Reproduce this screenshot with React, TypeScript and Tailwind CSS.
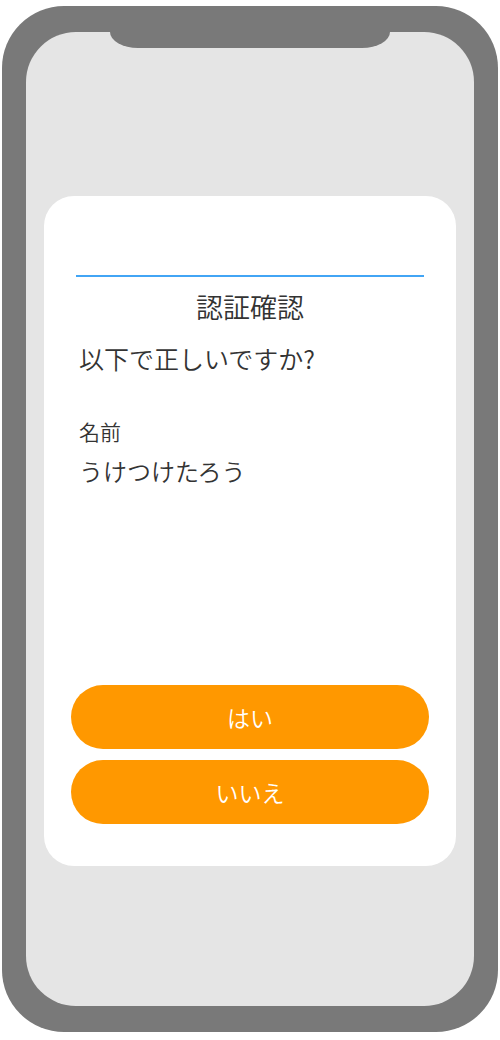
import React from "react";

export default function App() {
  const font = { fontFamily: '"Noto Sans CJK JP", "Noto Sans", sans-serif' };
  return (
    <div className="w-[500px] h-[1040px] bg-white relative" style={font}>
      <div className="absolute left-[2px] top-[6px] w-[496px] h-[1026px] rounded-[62px] bg-[#797979] px-[24px] py-[26px]">
        <div className="relative w-full h-full rounded-[50px] bg-[#e5e5e5] pt-[164px] px-[18px]">
          <div className="absolute left-[84px] top-0 w-[280px] h-[16px] bg-[#797979] rounded-bl-[28px_16px] rounded-br-[28px_16px]" />
          <div className="w-[412px] h-[670px] bg-white rounded-[30px] flex flex-col font-[350]">
            <div className="mt-[79px] mx-[32px] h-[2px] bg-[#42a5f5]" />
            <div className="mt-[13px] text-center text-[27px] leading-[34px] text-[#333333]">認証確認</div>
            <div className="mt-[17px] px-[35px] text-[25px] leading-[34px] text-[#333333]">以下で正しいですか?</div>
            <div className="mt-[44px] px-[35px] text-[21px] leading-[24px] text-[#333333]">名前</div>
            <div className="mt-[14px] px-[35px] text-[24px] leading-[28px] text-[#333333]">うけつけたろう</div>
            <div className="flex-1" />
            <div className="px-[27px] flex flex-col gap-[11px] mb-[42px]">
              <button className="h-[64px] rounded-full bg-[#ff9800] text-white text-[23px] font-[350]">はい</button>
              <button className="h-[64px] rounded-full bg-[#ff9800] text-white text-[23px] font-[350]">いいえ</button>
            </div>
          </div>
        </div>
      </div>
    </div>
  );
}
